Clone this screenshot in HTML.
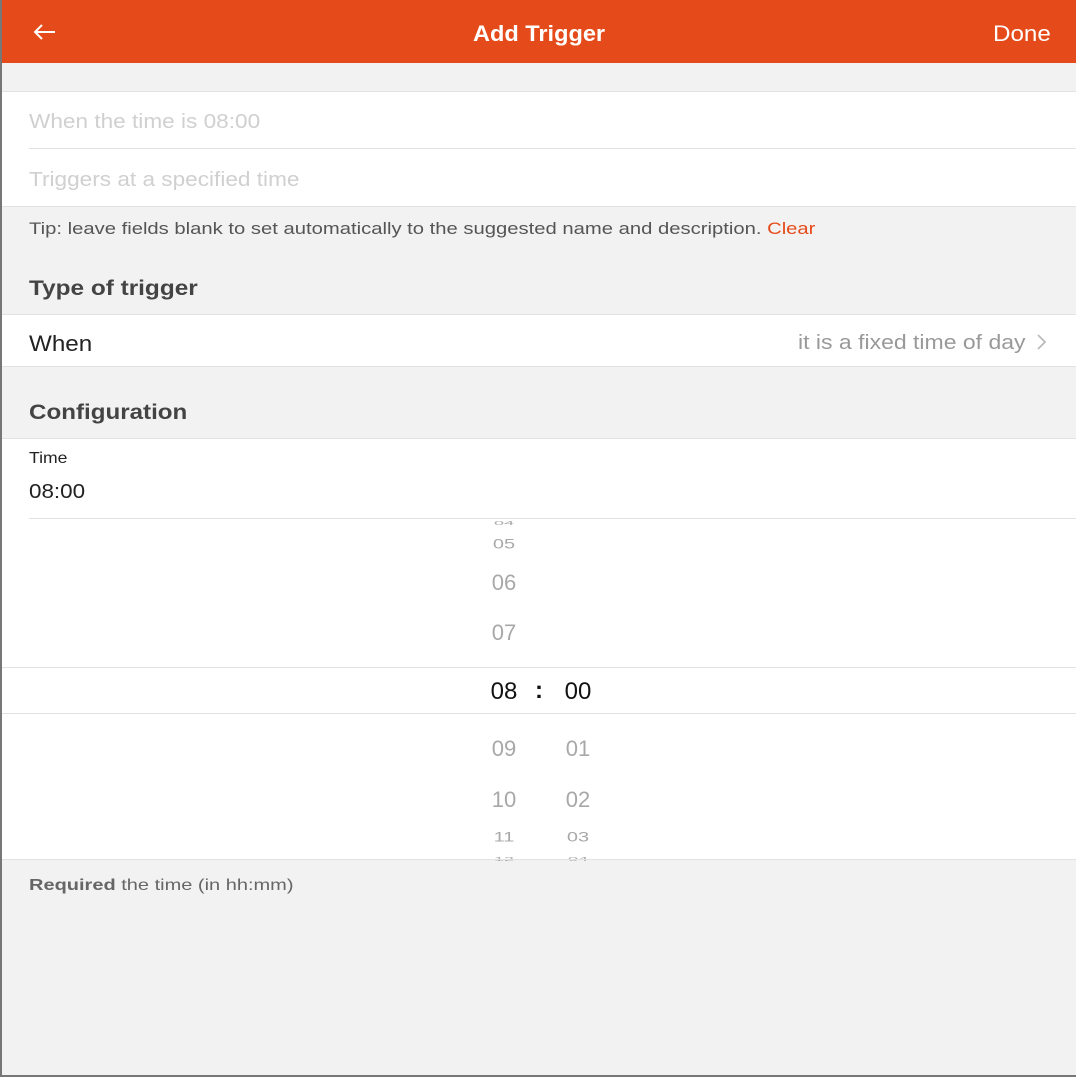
<!DOCTYPE html>
<html><head><meta charset="utf-8"><style>
*{margin:0;padding:0;box-sizing:border-box}
body{width:1076px;height:1077px;background:#f2f2f2;font-family:"Liberation Sans",sans-serif;position:relative;overflow:hidden}
.a{position:absolute;white-space:nowrap;transform-origin:left center}
.w{position:absolute;left:0;right:0;background:#fff}
.l{position:absolute;height:1px;background:#e2e2e2}
.n{position:absolute;width:40px;text-align:center;color:#a8a8a8;font-size:22px}
</style></head><body>
<div class="w" style="top:0;height:63px;background:#e54b1a"></div>
<svg class="a" style="left:31px;top:22px" width="26" height="20" viewBox="0 0 26 20"><path d="M24 10H4M11 3L4 10l7 7" stroke="#fff" stroke-width="2" fill="none"/></svg>
<div class="a" style="left:473px;top:21px;color:#fff;font-weight:bold;font-size:22px;transform:scaleX(1.07)">Add Trigger</div>
<div class="a" style="left:993px;top:21px;color:#fff;font-size:22px;transform:scaleX(1.1)">Done</div>

<div class="w" style="top:92px;height:114px"></div>
<div class="l" style="top:91px;left:0;right:0"></div>
<div class="l" style="top:148px;left:29px;right:0"></div>
<div class="l" style="top:206px;left:0;right:0"></div>
<div class="a" style="left:29px;top:111px;color:#d0d0d0;font-size:20px;transform:scaleX(1.13)">When the time is 08:00</div>
<div class="a" style="left:29px;top:169px;color:#d0d0d0;font-size:20px;transform:scaleX(1.13)">Triggers at a specified time</div>
<div class="a" style="left:29px;top:219px;color:#555;font-size:17px;transform:scaleX(1.19)">Tip: leave fields blank to set automatically to the suggested name and description. <span style="color:#e54b1a">Clear</span></div>

<div class="a" style="left:29px;top:277px;color:#444;font-weight:bold;font-size:21px;transform:scaleX(1.16)">Type of trigger</div>
<div class="w" style="top:314px;height:53px"></div>
<div class="l" style="top:314px;left:0;right:0"></div>
<div class="l" style="top:366px;left:0;right:0"></div>
<div class="a" style="left:29px;top:331px;color:#222;font-size:22px;transform:scaleX(1.1)">When</div>
<div class="a" style="left:798px;top:332px;color:#999;font-size:20px;transform:scaleX(1.15)">it is a fixed time of day</div>
<svg class="a" style="left:1036px;top:333px" width="12" height="18"><path d="M2 2l7 7-7 7" stroke="#bbb" stroke-width="1.8" fill="none"/></svg>

<div class="a" style="left:29px;top:401px;color:#444;font-weight:bold;font-size:21px;transform:scaleX(1.15)">Configuration</div>
<div class="w" style="top:438px;height:422px"></div>
<div class="l" style="top:438px;left:0;right:0"></div>
<div class="a" style="left:29px;top:450px;color:#222;font-size:16px;transform:scaleX(1.1)">Time</div>
<div class="a" style="left:29px;top:481px;color:#222;font-size:20px;transform:scaleX(1.12)">08:00</div>
<div class="l" style="top:518px;left:29px;right:0"></div>
<div class="l" style="top:667px;left:0;right:0"></div>
<div class="l" style="top:713px;left:0;right:0"></div>

<div class="n" style="left:484px;top:513px;font-size:18px;transform:scaleY(.3)">04</div>
<div class="n" style="left:484px;top:533px;font-size:20px;transform:scaleY(.7)">05</div>
<div class="n" style="left:484px;top:570px">06</div>
<div class="n" style="left:484px;top:620px">07</div>
<div class="n" style="left:484px;top:678px;color:#111;font-size:24px">08</div>
<div class="a" style="left:535px;top:677px;color:#111;font-size:24px;font-weight:bold">:</div>
<div class="n" style="left:558px;top:678px;color:#111;font-size:24px">00</div>
<div class="n" style="left:484px;top:736px">09</div>
<div class="n" style="left:558px;top:736px">01</div>
<div class="n" style="left:484px;top:787px">10</div>
<div class="n" style="left:558px;top:787px">02</div>
<div class="n" style="left:484px;top:826px;font-size:20px;transform:scaleY(.7)">11</div>
<div class="n" style="left:558px;top:826px;font-size:20px;transform:scaleY(.7)">03</div>
<div class="n" style="left:484px;top:849px;font-size:18px;transform:scaleY(.3)">12</div>
<div class="n" style="left:558px;top:849px;font-size:18px;transform:scaleY(.3)">04</div>

<div class="w" style="top:859px;height:1px;background:#e2e2e2"></div>
<div class="a" style="left:29px;top:877px;color:#666;font-size:16px;transform:scaleX(1.25)"><b>Required</b> the time (in hh:mm)</div>
<div class="a" style="left:0;top:0;width:2px;height:1077px;background:#777"></div>
<div class="a" style="left:0;top:1075px;width:1076px;height:2px;background:#777"></div>
</body></html>
